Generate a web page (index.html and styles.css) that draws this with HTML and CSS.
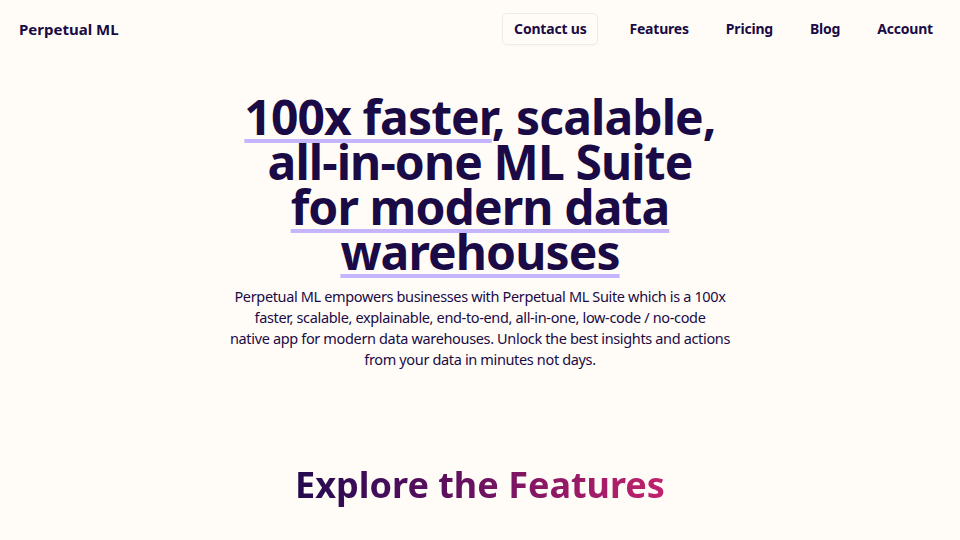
FILE: index.html
```html
<!DOCTYPE html>
<html lang="en">
<head>
<meta charset="utf-8">
<title>Perpetual ML</title>
<link rel="stylesheet" href="styles.css">
</head>
<body>
<header class="nav">
  <a class="brand" href="#">Perpetual ML</a>
  <nav class="links">
    <a class="contact" href="#">Contact us</a>
    <div class="menu">
      <a class="link" href="#">Features</a>
      <a class="link" href="#">Pricing</a>
      <a class="link" href="#">Blog</a>
      <a class="link" href="#">Account</a>
    </div>
  </nav>
</header>
<main>
  <section class="hero">
    <h1 class="title"><span class="mark">100x faster</span>, scalable,<br>all-in-one ML Suite<br><span class="mark">for modern data</span><br><span class="mark">warehouses</span></h1>
    <p class="lead">Perpetual ML empowers businesses with Perpetual ML Suite which is a 100x<br>faster, scalable, explainable, end-to-end, all-in-one, low-code / no-code<br>native app for modern data warehouses. Unlock the best insights and actions<br>from your data in minutes not days.</p>
  </section>
  <section class="features">
    <h2 class="explore">Explore the Features</h2>
  </section>
</main>
</body>
</html>
```
FILE: styles.css
```css
* { box-sizing: border-box; }
html, body { margin: 0; padding: 0; }
body {
  background: #fffcf7;
  color: #1a0b46;
  font-family: "Noto Sans", "Open Sans", sans-serif;
}
a { color: inherit; text-decoration: none; }
.nav {
  display: flex;
  justify-content: space-between;
  align-items: center;
  height: 57px;
  padding: 0 27px 0 19px;
}
.brand { font-weight: 700; font-size: 15px; }
.links { display: flex; align-items: center; gap: 31px; }
.menu { display: flex; align-items: center; gap: 37px; }
.link, .contact {
  font-weight: 700;
  font-size: 14px;
  letter-spacing: -0.2px;
  line-height: 20px;
}
.contact {
  border: 1px solid #efebe6;
  border-radius: 5px;
  padding: 5px 11px;
  box-shadow: 0 1px 2px rgba(0, 0, 0, 0.03);
}
.hero {
  display: flex;
  flex-direction: column;
  align-items: center;
  padding-top: 37px;
}
.title {
  margin: 0;
  font-size: 48px;
  line-height: 45px;
  font-weight: 700;
  text-align: center;
  letter-spacing: -0.9px;
}
.mark {
  text-decoration: underline;
  text-decoration-color: #c4b5fd;
  text-decoration-thickness: 4px;
  text-underline-offset: 4px;
}
.lead {
  margin: 12px 0 0;
  width: 520px;
  text-align: center;
  font-size: 14.5px;
  line-height: 21px;
  letter-spacing: -0.35px;
}
.features {
  display: flex;
  justify-content: center;
  padding-top: 90px;
}
.explore {
  margin: 0;
  font-size: 36px;
  font-weight: 700;
  background: linear-gradient(90deg, #220a4f 0%, #5c0f5e 40%, #c2226d 100%);
  -webkit-background-clip: text;
  background-clip: text;
  color: transparent;
}
```
